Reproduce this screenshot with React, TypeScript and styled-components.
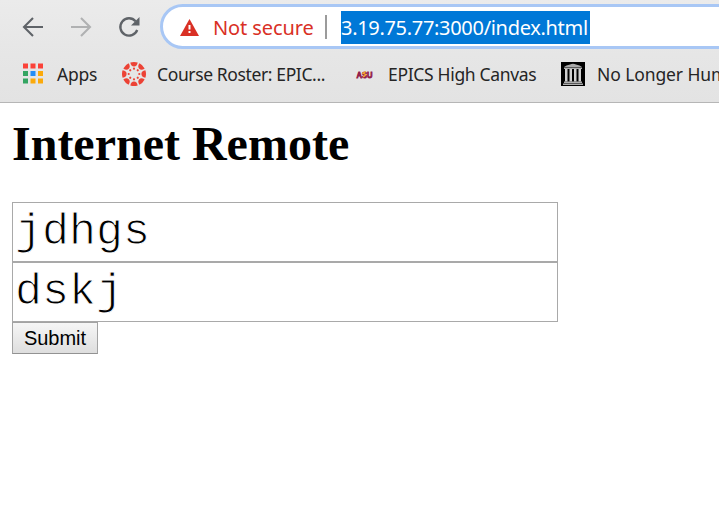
import React from 'react';
import styled, { createGlobalStyle } from 'styled-components';

const GlobalStyle = createGlobalStyle`
  * { box-sizing: border-box; }
  body { margin: 0; background: #fff; overflow: hidden; }
`;

const Window = styled.div`
  width: 719px;
  height: 523px;
  overflow: hidden;
  background: #fff;
`;

const Chrome = styled.header`
  height: 103px;
  padding-top: 4px;
  background: linear-gradient(#ebebeb, #e6e6e6 55px, #e3e3e3);
  border-bottom: 1px solid #b6b6b6;
  font-family: 'Noto Sans', sans-serif;
  overflow: hidden;
`;

const Toolbar = styled.div`
  display: flex;
  align-items: center;
  height: 45px;
  padding-left: 22px;
`;

const Navigation = styled.nav`
  display: flex;
  gap: 26px;
  width: 138px;
  flex: none;

  svg { display: block; }
`;

const AddressBar = styled.div`
  display: flex;
  align-items: center;
  flex: none;
  width: 600px;
  height: 45px;
  padding: 1px 0 0 17px;
  border: 3px solid #a8c7f5;
  border-radius: 23px;
  background: #fff;
`;

const Label = styled.span<{ $width: number; $spacing: number }>`
  flex: none;
  width: ${(p) => p.$width}px;
  letter-spacing: ${(p) => p.$spacing}px;
  white-space: nowrap;
`;

const SecurityLabel = styled(Label)`
  margin-left: 14px;
  color: #d93025;
  font-size: 20px;
  line-height: 33px;
`;

const Divider = styled.div`
  width: 2px;
  height: 24px;
  margin: 0 14px 0 13px;
  background: #9b9b9b;
`;

const SelectedUrl = styled(Label)`
  height: 33px;
  background: #0078d7;
  color: #fff;
  font-size: 20px;
  line-height: 33px;
`;

const Bookmarks = styled.div`
  display: flex;
  align-items: center;
  height: 50px;
  padding-left: 20px;
`;

const Bookmark = styled.div<{ $gap: number; $iconGap?: number }>`
  display: flex;
  flex: none;
  align-items: center;
  margin-right: ${(p) => p.$gap}px;
  color: #252525;
  font-size: 17.5px;
  line-height: 26px;

  svg { display: block; margin-right: ${(p) => p.$iconGap ?? 11}px; }
`;

const Page = styled.main`
  padding: 14px 12px 0;
`;

const Heading = styled.h1`
  height: 54px;
  margin: 0 0 31px;
  color: #000;
  font: bold 48px/54px 'Liberation Serif', serif;
`;

const Form = styled.form`
  display: flex;
  flex-direction: column;
  align-items: flex-start;
`;

const Field = styled.input`
  display: block;
  width: 546px;
  height: 60px;
  padding: 0 2px;
  border: 1px solid #a9a9a9;
  border-radius: 0;
  outline: none;
  background: #fff;
  color: #000;
  font: 45px 'Courier New', 'Liberation Mono', monospace;
  -webkit-text-stroke: 1px #fff;
`;

const SubmitButton = styled.button`
  width: 86px;
  height: 32px;
  padding: 0;
  border: 1px solid #a3a3a3;
  border-bottom-color: #929292;
  border-radius: 0;
  background: linear-gradient(#f6f6f6, #dedede);
  color: #000;
  font: 20px/30px 'Liberation Sans', sans-serif;
`;

const Back = () => (
  <svg width="22" height="22" viewBox="0 0 22 22" fill="none" stroke="#5f6368" strokeWidth="2.1">
    <path d="M21 11H2.5M11 2L2 11l9 9" />
  </svg>
);

const Forward = () => (
  <svg width="22" height="22" viewBox="0 0 22 22" fill="none" stroke="#b0b1b2" strokeWidth="2.1">
    <path d="M1 11h18.500M11 2l9 9-9 9" />
  </svg>
);

const Reload = () => (
  <svg width="22" height="22" viewBox="0 0 22 22">
    <path d="M17.600 5.200A8.700 8.700 0 1 0 19.200 14" fill="none" stroke="#5f6368" strokeWidth="2.3" />
    <path d="M21.500 1v8.500H13z" fill="#5f6368" />
  </svg>
);

const Warning = () => (
  <svg width="19" height="17" viewBox="0 0 19 17">
    <path d="M9.500 0L19 17H0z" fill="#d93025" />
    <path d="M8.500 6h2v4.500h-2zM8.500 12h2v2h-2z" fill="#fff" />
  </svg>
);

const tiles = ['#fb4239', '#fb4239', '#fb4239', '#34a562', '#238df5', '#fbaa0b', '#34a562', '#fbaa0b', '#fbaa0b'];

const AppsIcon = () => (
  <svg width="26" height="24" viewBox="0 0 26 24">
    {tiles.map((color, i) => (
      <rect key={i} x={3 + (i % 3) * 7.5} y={1.5 + Math.floor(i / 3) * 7.5} width="5" height="5" fill={color} />
    ))}
  </svg>
);

const spokes = [0, 45, 90, 135, 180, 225, 270, 315];

const CanvasIcon = () => (
  <svg width="24" height="24" viewBox="0 0 24 24" fill="#ec4235">
    {spokes.map((angle) => (
      <g key={angle} transform={`rotate(${angle} 12 12)`}>
        <path d="M8.300 .600Q12-.600 15.700 .600Q15 4.600 12 4.600T8.300 .600z" />
        <circle cx="12" cy="6.700" r="1.100" />
      </g>
    ))}
  </svg>
);

const AsuText = styled.text`
  font: 900 9.5px 'Liberation Sans', sans-serif;
`;

const AsuIcon = () => (
  <svg width="20" height="24" viewBox="0 0 20 24">
    <AsuText x="2.500" y="15.500" textLength="16" lengthAdjust="spacingAndGlyphs" fill="#94204b" stroke="#94204b" strokeWidth=".9">ASU</AsuText>
    <path d="M12 9.500l-3 1.800 3 1.400-3 2.300" fill="none" stroke="#f7ae2d" strokeWidth="1.200" />
  </svg>
);

const MuseumIcon = () => (
  <svg width="24" height="24" viewBox="0 0 24 24">
    <path d="M0 0h24v24H0z" fill="#000" />
    <path d="M3 5Q5 3 9 2.500Q12 1 15 2.500Q19 3 21 5z" fill="#aaa" />
    <path d="M3 5.500h18V7H3zM3 19.500h18V21H3zM2 21.500h20V23H2z" fill="#b0b0b0" />
    <path d="M4 7h2.500v12.500H4zM8.500 7H11v12.500H8.500zM13 7h2.500v12.500H13zM17.500 7H20v12.500h-2.500z" fill="#d0d0d0" />
  </svg>
);

export default function App() {
  return (
    <Window>
      <GlobalStyle />
      <Chrome>
        <Toolbar>
          <Navigation><Back /><Forward /><Reload /></Navigation>
          <AddressBar>
            <Warning />
            <SecurityLabel $width={99} $spacing={-0.1}>Not secure</SecurityLabel>
            <Divider />
            <SelectedUrl $width={249} $spacing={-0.31}>3.19.75.77:3000/index.html</SelectedUrl>
          </AddressBar>
        </Toolbar>
        <Bookmarks>
          <Bookmark $gap={25}><AppsIcon /><Label $width={40} $spacing={-0.2}>Apps</Label></Bookmark>
          <Bookmark $gap={29}><CanvasIcon /><Label $width={168} $spacing={-0.38}>Course Roster: EPIC...</Label></Bookmark>
          <Bookmark $gap={24} $iconGap={14}><AsuIcon /><Label $width={149} $spacing={-0.32}>EPICS High Canvas</Label></Bookmark>
          <Bookmark $gap={0} $iconGap={12}><MuseumIcon /><Label $width={140} $spacing={-0.1}>No Longer Human</Label></Bookmark>
        </Bookmarks>
      </Chrome>
      <Page>
        <Heading>Internet Remote</Heading>
        <Form onSubmit={(event) => event.preventDefault()}>
          <Field aria-label="First value" defaultValue="jdhgs" spellCheck={false} />
          <Field aria-label="Second value" defaultValue="dskj" spellCheck={false} />
          <SubmitButton type="submit">Submit</SubmitButton>
        </Form>
      </Page>
    </Window>
  );
}
